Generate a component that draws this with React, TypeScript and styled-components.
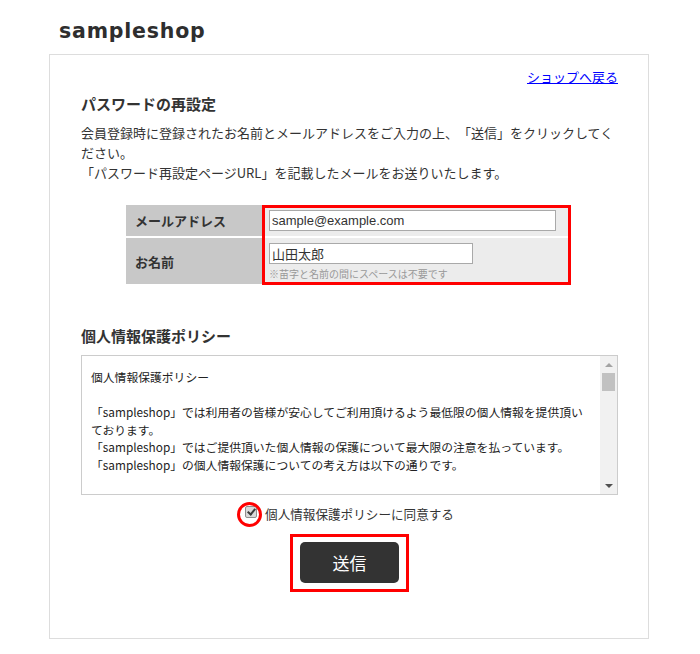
import React from "react";
import styled, { createGlobalStyle } from "styled-components";

const GlobalStyle = createGlobalStyle`
  html, body {
    margin: 0;
    padding: 0;
    background: #ffffff;
  }
  body {
    font-family: "Noto Sans CJK JP", "Liberation Sans", sans-serif;
    color: #333333;
    font-size: 13px;
    text-spacing-trim: space-all;
  }
  * { box-sizing: border-box; }
`;

const Page = styled.div`
  width: 600px;
  margin-left: 49px;
  padding-top: 18px;
`;

const SiteTitle = styled.h1`
  margin: 0 0 10px 0;
  padding-left: 10px;
  font-family: "DejaVu Sans", "Liberation Sans", sans-serif;
  font-weight: 700;
  font-size: 20.5px;
  letter-spacing: 0.8px;
  line-height: 26px;
  color: #2e2e2e;
`;

const Panel = styled.main`
  width: 600px;
  border: 1px solid #dddddd;
  padding: 12px 30px 46px 31px;
  display: flex;
  flex-direction: column;
`;

const BackRow = styled.div`
  display: flex;
  justify-content: flex-end;
  line-height: 20px;
`;

const BackLink = styled.a`
  color: #0000ff;
  font-size: 13px;
  text-decoration: underline;
`;

const SectionTitle = styled.h2<{ $top: number }>`
  margin: ${(p) => p.$top}px 0 0 0;
  font-size: 15px;
  font-weight: 700;
  line-height: 22px;
  color: #333333;
`;

const Lead = styled.p`
  margin: 8px 0 0 0;
  font-size: 13px;
  line-height: 20px;
  color: #333333;
`;

const FormGrid = styled.div`
  position: relative;
  margin: 22px 0 0 45px;
  width: 445px;
  display: grid;
  grid-template-columns: 136px 309px;
  grid-template-rows: 31px 46px;
  row-gap: 2px;
  background: #ffffff;
`;

const LabelCell = styled.div`
  background: #c8c8c8;
  display: flex;
  align-items: center;
  padding-left: 9px;
  font-size: 13px;
  font-weight: 700;
  color: #333333;
`;

const FieldCell = styled.div`
  background: #ececec;
  padding: 5px 0 0 7px;
  display: flex;
  flex-direction: column;
  align-items: flex-start;
`;

const TextInput = styled.input<{ $w: number }>`
  width: ${(p) => p.$w}px;
  height: 21px;
  margin: 0;
  padding: 0 2px;
  border: 1px solid #a9a9a9;
  background: #ffffff;
  font-family: "Liberation Sans", "Noto Sans CJK JP", sans-serif;
  font-size: 13px;
  color: #333333;
  outline: none;
`;

const Hint = styled.span`
  margin-top: 3px;
  font-size: 10px;
  line-height: 14px;
  color: #999999;
`;

const Highlight = styled.div`
  position: absolute;
  top: 0;
  left: 136px;
  right: 0;
  bottom: -1px;
  border: 3px solid #ff0000;
  pointer-events: none;
`;

const PolicyBox = styled.div`
  margin-top: 8px;
  height: 140px;
  border: 1px solid #cccccc;
  display: flex;
`;

const PolicyText = styled.div`
  flex: 1;
  overflow: hidden;
  padding: 12px 12px 10px 9px;
  font-size: 11.8px;
  line-height: 17.5px;
  color: #222222;
`;

const PolicyLine = styled.p`
  margin: 0;
`;

const Blank = styled.div`
  height: 17.5px;
`;

const ScrollBar = styled.div`
  width: 17px;
  background: #f1f1f1;
  display: flex;
  flex-direction: column;
`;

const ScrollButton = styled.div`
  height: 17px;
  display: flex;
  align-items: center;
  justify-content: center;
`;

const Arrow = styled.span<{ $dir: "up" | "down"; $color: string }>`
  width: 0;
  height: 0;
  border-left: 4px solid transparent;
  border-right: 4px solid transparent;
  ${(p) =>
    p.$dir === "up"
      ? `border-bottom: 4px solid ${p.$color};`
      : `border-top: 4px solid ${p.$color};`}
`;

const Track = styled.div`
  flex: 1;
  padding: 0 2px;
`;

const Thumb = styled.div`
  height: 18px;
  background: #c1c1c1;
`;

const AgreeRow = styled.label`
  margin-top: 9px;
  display: flex;
  justify-content: center;
  align-items: center;
  gap: 8px;
  line-height: 20px;
  font-size: 12.6px;
  color: #333333;
`;

const CheckWrap = styled.span`
  position: relative;
  display: inline-flex;
  margin-bottom: 4px;
`;

const CheckBox = styled.input`
  appearance: none;
  -webkit-appearance: none;
  position: relative;
  width: 12px;
  height: 12px;
  margin: 0;
  border: 1px solid #8e8e8e;
  border-radius: 2px;
  background: #d9d9d9;
  &:checked::after {
    content: "";
    position: absolute;
    left: 3px;
    top: 0px;
    width: 3px;
    height: 6px;
    border-right: 2px solid #3a3a3a;
    border-bottom: 2px solid #3a3a3a;
    transform: rotate(40deg);
  }
`;

const CircleMark = styled.span`
  position: absolute;
  left: -8px;
  top: -4px;
  width: 25px;
  height: 25px;
  border: 3px solid #ff0000;
  border-radius: 50%;
  pointer-events: none;
`;

const SubmitRow = styled.div`
  margin-top: 10px;
  display: flex;
  justify-content: center;
`;

const SubmitFrame = styled.div`
  border: 3px solid #ff0000;
  padding: 5px 7px 6px 7px;
`;

const SubmitButton = styled.button`
  width: 99px;
  height: 41px;
  border: none;
  border-radius: 5px;
  background: #333333;
  color: #ffffff;
  font-family: "Noto Sans CJK JP", sans-serif;
  font-size: 17px;
  cursor: pointer;
`;

const policyLines: (string | null)[] = [
  "個人情報保護ポリシー",
  null,
  "「sampleshop」では利用者の皆様が安心してご利用頂けるよう最低限の個人情報を提供頂いております。",
  "「sampleshop」ではご提供頂いた個人情報の保護について最大限の注意を払っています。",
  "「sampleshop」の個人情報保護についての考え方は以下の通りです。",
  null,
  "■ 個人情報の収集について",
  "当社では、ご注文の際に必要な範囲で個人情報を収集いたします。",
  null,
  "■ 個人情報の利用目的",
  "ご提供頂いた個人情報は、商品の発送およびご連絡のために利用いたします。",
  null,
  "■ 第三者への開示",
  "法令に基づく場合を除き、ご本人の同意なく第三者へ開示することはありません。",
];

export default function App() {
  return (
    <>
      <GlobalStyle />
      <Page>
        <SiteTitle>sampleshop</SiteTitle>
        <Panel>
          <BackRow>
            <BackLink href="#">ショップへ戻る</BackLink>
          </BackRow>
          <SectionTitle $top={6}>パスワードの再設定</SectionTitle>
          <Lead>
            会員登録時に登録されたお名前とメールアドレスをご入力の上、「送信」をクリックしてください。
            <br />
            「パスワード再設定ページURL」を記載したメールをお送りいたします。
          </Lead>
          <FormGrid>
            <LabelCell>メールアドレス</LabelCell>
            <FieldCell>
              <TextInput $w={287} type="text" defaultValue="sample@example.com" />
            </FieldCell>
            <LabelCell>お名前</LabelCell>
            <FieldCell>
              <TextInput $w={204} type="text" defaultValue="山田太郎" />
              <Hint>※苗字と名前の間にスペースは不要です</Hint>
            </FieldCell>
            <Highlight />
          </FormGrid>
          <SectionTitle $top={41}>個人情報保護ポリシー</SectionTitle>
          <PolicyBox>
            <PolicyText>
              {policyLines.map((line, i) =>
                line === null ? <Blank key={i} /> : <PolicyLine key={i}>{line}</PolicyLine>
              )}
            </PolicyText>
            <ScrollBar>
              <ScrollButton>
                <Arrow $dir="up" $color="#a3a3a3" />
              </ScrollButton>
              <Track>
                <Thumb />
              </Track>
              <ScrollButton>
                <Arrow $dir="down" $color="#505050" />
              </ScrollButton>
            </ScrollBar>
          </PolicyBox>
          <AgreeRow>
            <CheckWrap>
              <CheckBox type="checkbox" defaultChecked />
              <CircleMark />
            </CheckWrap>
            個人情報保護ポリシーに同意する
          </AgreeRow>
          <SubmitRow>
            <SubmitFrame>
              <SubmitButton type="button">送信</SubmitButton>
            </SubmitFrame>
          </SubmitRow>
        </Panel>
      </Page>
    </>
  );
}
